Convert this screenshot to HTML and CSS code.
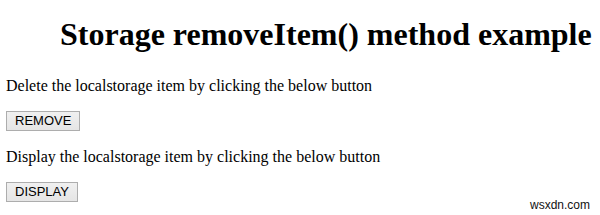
FILE: index.html
```html
<!DOCTYPE html>
<html lang="en">
<head>
    <meta charset="UTF-8">
    <meta name="viewport" content="width=device-width, initial-scale=1.0">
    <title>Storage removeItem() method example</title>
    <link rel="stylesheet" href="styles.css">
</head>
<body>
    <h1>Storage removeItem() method example</h1>
    <p>Delete the localstorage item by clicking the below button</p>
    <p class="actions"><button class="btn" id="remove">REMOVE</button></p>
    <p>Display the localstorage item by clicking the below button</p>
    <p class="actions"><button class="btn" id="display">DISPLAY</button></p>
    <div class="watermark">wsxdn.com</div>
</body>
</html>
```

FILE: styles.css
```css
body {
    font-family: "Liberation Serif", "Times New Roman", serif;
    font-size: 16px;
    margin: 0;
    padding: 16px 6px 0 6px;
    background-color: #fff;
    color: #000;
}
h1 {
    font-size: 32px;
    line-height: 36px;
    margin: 0 0 25px 0;
    padding-left: 54px;
}
p {
    margin: 16px 0;
    line-height: 18px;
}
h1 + p {
    margin-top: 25px;
}
.actions {
    margin-bottom: 17px;
}
.btn {
    display: block;
    font-family: "Liberation Sans", Arial, sans-serif;
    font-size: 13px;
    line-height: 16px;
    padding: 1px 8px;
    border: 1px solid #adadad;
    border-radius: 0;
    background: linear-gradient(#f0f0f0, #e5e5e5);
    color: #000;
}
.watermark {
    position: absolute;
    right: 10px;
    top: 198px;
    font-family: "Liberation Sans", Arial, sans-serif;
    font-size: 12px;
    color: #111;
}
```
